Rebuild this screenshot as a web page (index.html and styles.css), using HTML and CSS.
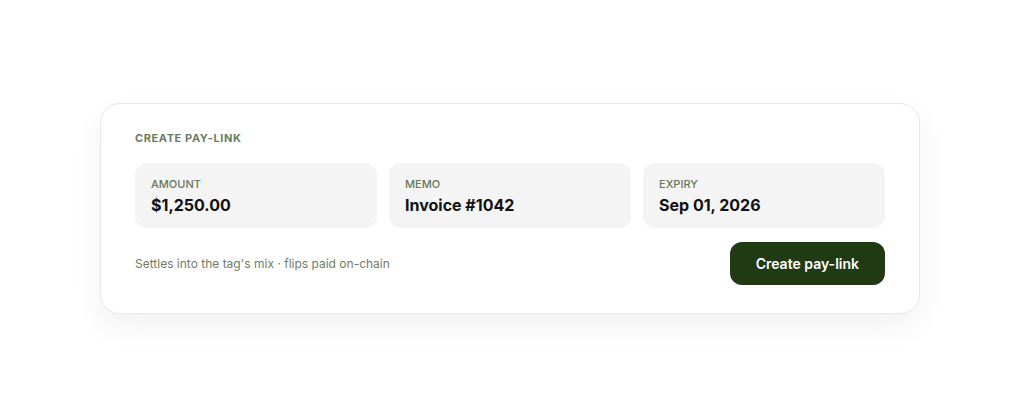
FILE: index.html
```html
<!DOCTYPE html>
<html lang="en">
<head>
    <meta charset="UTF-8">
    <meta name="viewport" content="width=device-width, initial-scale=1.0">
    <title>Create Pay-Link</title>
    <link rel="stylesheet" href="styles.css">
</head>
<body>
    <div class="card">
        <h2 class="card-title">Create pay-link</h2>

        <div class="fields">
            <div class="field">
                <div class="field-label">Amount</div>
                <div class="field-value">$1,250.00</div>
            </div>
            <div class="field">
                <div class="field-label">Memo</div>
                <div class="field-value">Invoice #1042</div>
            </div>
            <div class="field">
                <div class="field-label">Expiry</div>
                <div class="field-value">Sep 01, 2026</div>
            </div>
        </div>

        <div class="card-footer">
            <p class="hint">Settles into the tag's mix · flips paid on-chain</p>
            <button type="button" class="create-button">Create pay-link</button>
        </div>
    </div>
</body>
</html>
```

FILE: styles.css
```css
* {
    margin: 0;
    padding: 0;
    box-sizing: border-box;
    font-family: Inter, 'Noto Sans', sans-serif;
}

body {
    background-color: #ffffff;
    display: flex;
    justify-content: center;
    align-items: center;
    min-height: 100vh;
}

.card {
    width: 820px;
    background-color: #ffffff;
    border: 1px solid #e6e8e4;
    border-radius: 20px;
    box-shadow: 0 12px 30px rgba(0, 0, 0, 0.06);
    padding: 27px 34px 28px;
}

.card-title {
    font-size: 11px;
    line-height: 14px;
    font-weight: 700;
    letter-spacing: 0.6px;
    text-transform: uppercase;
    color: #6b7c5e;
    margin-bottom: 18px;
}

.fields {
    display: grid;
    grid-template-columns: repeat(3, 1fr);
    gap: 12px;
}

.field {
    background-color: #f4f4f4;
    border-radius: 12px;
    padding: 13px 16px 12px;
}

.field-label {
    font-size: 11px;
    line-height: 16px;
    font-weight: 500;
    text-transform: uppercase;
    color: #66775a;
}

.field-value {
    margin-top: 2px;
    font-size: 16px;
    line-height: 22px;
    font-weight: 700;
    color: #111111;
}

.card-footer {
    display: flex;
    justify-content: space-between;
    align-items: center;
    margin-top: 14px;
}

.hint {
    font-size: 12px;
    color: #6f7c66;
}

.create-button {
    height: 43px;
    padding: 0 26px;
    background-color: #213a14;
    color: #ffffff;
    border: none;
    border-radius: 12px;
    font-size: 14px;
    font-weight: 600;
    cursor: pointer;
}
```
